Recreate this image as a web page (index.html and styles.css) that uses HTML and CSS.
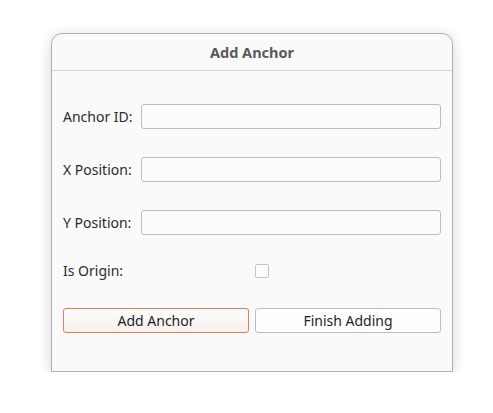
FILE: index.html
```html
<!DOCTYPE html>
<html>
<head>
<meta charset="utf-8">
<link rel="stylesheet" href="styles.css">
</head>
<body>
<div class="window">
  <div class="titlebar">Add Anchor</div>
  <div class="form">
    <div class="row r1">
      <span class="label">Anchor ID:</span>
      <div class="input"></div>
    </div>
    <div class="row r2">
      <span class="label">X Position:</span>
      <div class="input"></div>
    </div>
    <div class="row r2">
      <span class="label">Y Position:</span>
      <div class="input"></div>
    </div>
    <div class="row r4">
      <span class="label">Is Origin:</span>
      <div class="check"></div>
    </div>
    <div class="buttons">
      <div class="btn primary">Add Anchor</div>
      <div class="btn">Finish Adding</div>
    </div>
  </div>
</div>
</body>
</html>
```

FILE: styles.css
```css
html, body {
  margin: 0;
  padding: 0;
  background: #ffffff;
}
body {
  padding: 33px 0 0 51px;
  font-family: "Noto Sans", "Open Sans", sans-serif;
  font-size: 14px;
  color: #2b2b2b;
}
.window {
  width: 402px;
  height: 339px;
  box-sizing: border-box;
  background: #fafafa;
  border: 1px solid #b0b0b0;
  border-radius: 11px 11px 0 0;
  box-shadow: 0 3px 14px rgba(0,0,0,0.18);
  display: flex;
  flex-direction: column;
}
.titlebar {
  height: 36px;
  border-bottom: 1px solid #d6d6d6;
  display: flex;
  align-items: center;
  justify-content: center;
  font-weight: bold;
  font-size: 14.5px;
  color: #5a5a5a;
}
.form {
  padding: 33px 11px 0 11px;
  display: flex;
  flex-direction: column;
}
.row {
  display: flex;
  align-items: center;
  height: 25px;
}
.r2 { margin-top: 28px; }
.r4 { margin-top: 23px; }
.label {
  width: 78px;
  flex: none;
}
.input {
  flex: 1;
  height: 25px;
  box-sizing: border-box;
  border: 1px solid #bcbcbc;
  border-radius: 3px;
  background: #fcfcfc;
}
.check {
  margin-left: 114px;
  width: 14px;
  height: 14px;
  box-sizing: border-box;
  border: 1px solid #c4c4c4;
  border-radius: 2px;
  background: #fdfdfd;
}
.buttons {
  margin-top: 25px;
  display: flex;
  gap: 6px;
}
.btn {
  flex: 1;
  height: 25px;
  box-sizing: border-box;
  border: 1px solid #bdbdbd;
  border-radius: 3px;
  background: #fefefe;
  display: flex;
  align-items: center;
  justify-content: center;
  color: #1e1e1e;
}
.btn.primary {
  border-color: #ea7a55;
  background: linear-gradient(#fdfcfb, #f7f1ee);
}
```
